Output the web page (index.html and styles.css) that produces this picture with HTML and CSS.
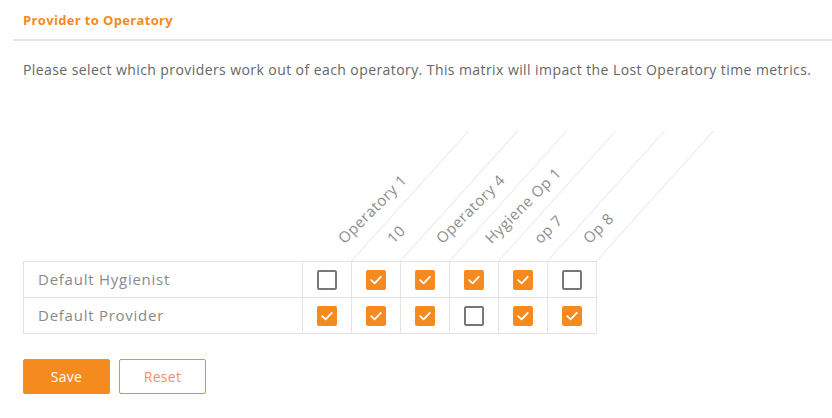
FILE: index.html
```html
<!DOCTYPE html>
<html>
<head>
<meta charset="utf-8">
<link rel="stylesheet" href="styles.css">
</head>
<body>
<div class="panel">
  <div class="panel-head"><h2 class="title">Provider to Operatory</h2></div>
  <p class="desc">Please select which providers work out of each operatory. This matrix will impact the Lost Operatory time metrics.</p>
  <div class="matrix">
    <div class="hrow">
      <div class="hspacer"></div>
      <div class="hcell"><span class="hlabel">Operatory 1</span></div>
      <div class="hcell"><span class="hlabel">10</span></div>
      <div class="hcell"><span class="hlabel">Operatory 4</span></div>
      <div class="hcell"><span class="hlabel">Hygiene Op 1</span></div>
      <div class="hcell"><span class="hlabel">op 7</span></div>
      <div class="hcell"><span class="hlabel">Op 8</span></div>
    </div>
    <div class="grid">
      <div class="name">Default Hygienist</div>
      <div class="cell"><span class="cb"></span></div>
      <div class="cell"><span class="cb on"><svg viewBox="0 0 20 20"><path d="M5.2 10.2 L8.6 13.4 L14.8 6.8"/></svg></span></div>
      <div class="cell"><span class="cb on"><svg viewBox="0 0 20 20"><path d="M5.2 10.2 L8.6 13.4 L14.8 6.8"/></svg></span></div>
      <div class="cell"><span class="cb on"><svg viewBox="0 0 20 20"><path d="M5.2 10.2 L8.6 13.4 L14.8 6.8"/></svg></span></div>
      <div class="cell"><span class="cb on"><svg viewBox="0 0 20 20"><path d="M5.2 10.2 L8.6 13.4 L14.8 6.8"/></svg></span></div>
      <div class="cell"><span class="cb"></span></div>
      <div class="name">Default Provider</div>
      <div class="cell"><span class="cb on"><svg viewBox="0 0 20 20"><path d="M5.2 10.2 L8.6 13.4 L14.8 6.8"/></svg></span></div>
      <div class="cell"><span class="cb on"><svg viewBox="0 0 20 20"><path d="M5.2 10.2 L8.6 13.4 L14.8 6.8"/></svg></span></div>
      <div class="cell"><span class="cb on"><svg viewBox="0 0 20 20"><path d="M5.2 10.2 L8.6 13.4 L14.8 6.8"/></svg></span></div>
      <div class="cell"><span class="cb"></span></div>
      <div class="cell"><span class="cb on"><svg viewBox="0 0 20 20"><path d="M5.2 10.2 L8.6 13.4 L14.8 6.8"/></svg></span></div>
      <div class="cell"><span class="cb on"><svg viewBox="0 0 20 20"><path d="M5.2 10.2 L8.6 13.4 L14.8 6.8"/></svg></span></div>
    </div>
  </div>
  <div class="actions">
    <button class="btn btn-primary">Save</button>
    <button class="btn btn-outline">Reset</button>
  </div>
</div>
</body>
</html>
```

FILE: styles.css
```css
* { box-sizing: border-box; }
html, body { margin: 0; padding: 0; background: #fff; }
body {
  font-family: "Open Sans", "Liberation Sans", sans-serif;
  color: #666;
  width: 832px;
  height: 418px;
  overflow: hidden;
}
.panel-head {
  margin-left: 13px;
  height: 41px;
  border-bottom: 2px solid #e4e4e4;
  padding: 11px 0 0 10px;
}
.title {
  margin: 0;
  font-size: 13px;
  line-height: 18px;
  font-weight: 700;
  letter-spacing: 0.35px;
  color: #f58a1f;
}
.desc {
  margin: 20px 0 0 23px;
  font-size: 14px;
  line-height: 18px;
  color: #666;
  letter-spacing: 0.42px;
}
.matrix {
  margin: 52px 0 0 23px;
}
.hrow {
  display: flex;
  height: 130px;
}
.hspacer { width: 280px; flex: none; }
.hcell {
  width: 49px;
  flex: none;
  position: relative;
  display: flex;
  align-items: flex-end;
  padding: 0 0 15px 43px;
}
.hcell::before {
  content: "";
  position: absolute;
  left: 0; right: 0; top: 0; bottom: 0;
  border-right: 1px solid #e2e2e2;
  transform: skewX(-42deg);
  transform-origin: bottom;
}
.hlabel {
  flex: none;
  white-space: nowrap;
  font-size: 15px;
  line-height: 16px;
  letter-spacing: 0.5px;
  color: #8c8c8c;
  transform: rotate(-45deg);
  transform-origin: 0 100%;
  position: relative;
}
.grid {
  display: grid;
  grid-template-columns: 280px repeat(6, 49px);
  grid-auto-rows: 36px;
  width: 574px;
  border-top: 1px solid #e3e3e3;
}
.name, .cell {
  border-right: 1px solid #e3e3e3;
  border-bottom: 1px solid #e3e3e3;
}
.name {
  border-left: 1px solid #e3e3e3;
  padding: 0 0 2px 14px;
  display: flex;
  align-items: center;
  font-size: 15px;
  letter-spacing: 0.75px;
  color: #8a8a8a;
}
.cell {
  display: flex;
  align-items: center;
  justify-content: center;
}
.cb {
  width: 20px;
  height: 20px;
  border: 2px solid #777;
  border-radius: 2px;
  display: block;
  background: #fff;
}
.cb.on {
  border: none;
  background: #f58a1f;
}
.cb svg { width: 20px; height: 20px; display: block; }
.cb path { fill: none; stroke: #fff; stroke-width: 1.8; stroke-linecap: round; stroke-linejoin: round; }
.actions {
  margin: 25px 0 0 23px;
  display: flex;
  gap: 9px;
}
.btn {
  width: 87px;
  height: 35px;
  border-radius: 2px;
  font-family: "Open Sans", "Liberation Sans", sans-serif;
  font-size: 14px;
  font-weight: 500;
  letter-spacing: 0.3px;
  cursor: pointer;
}
.btn-primary {
  background: #f58a1f;
  border: 1px solid #f58a1f;
  color: #fff;
}
.btn-outline {
  background: #fff;
  border: 1px solid #f58a1f;
  color: #f2906a;
  font-weight: 400;
}
```
